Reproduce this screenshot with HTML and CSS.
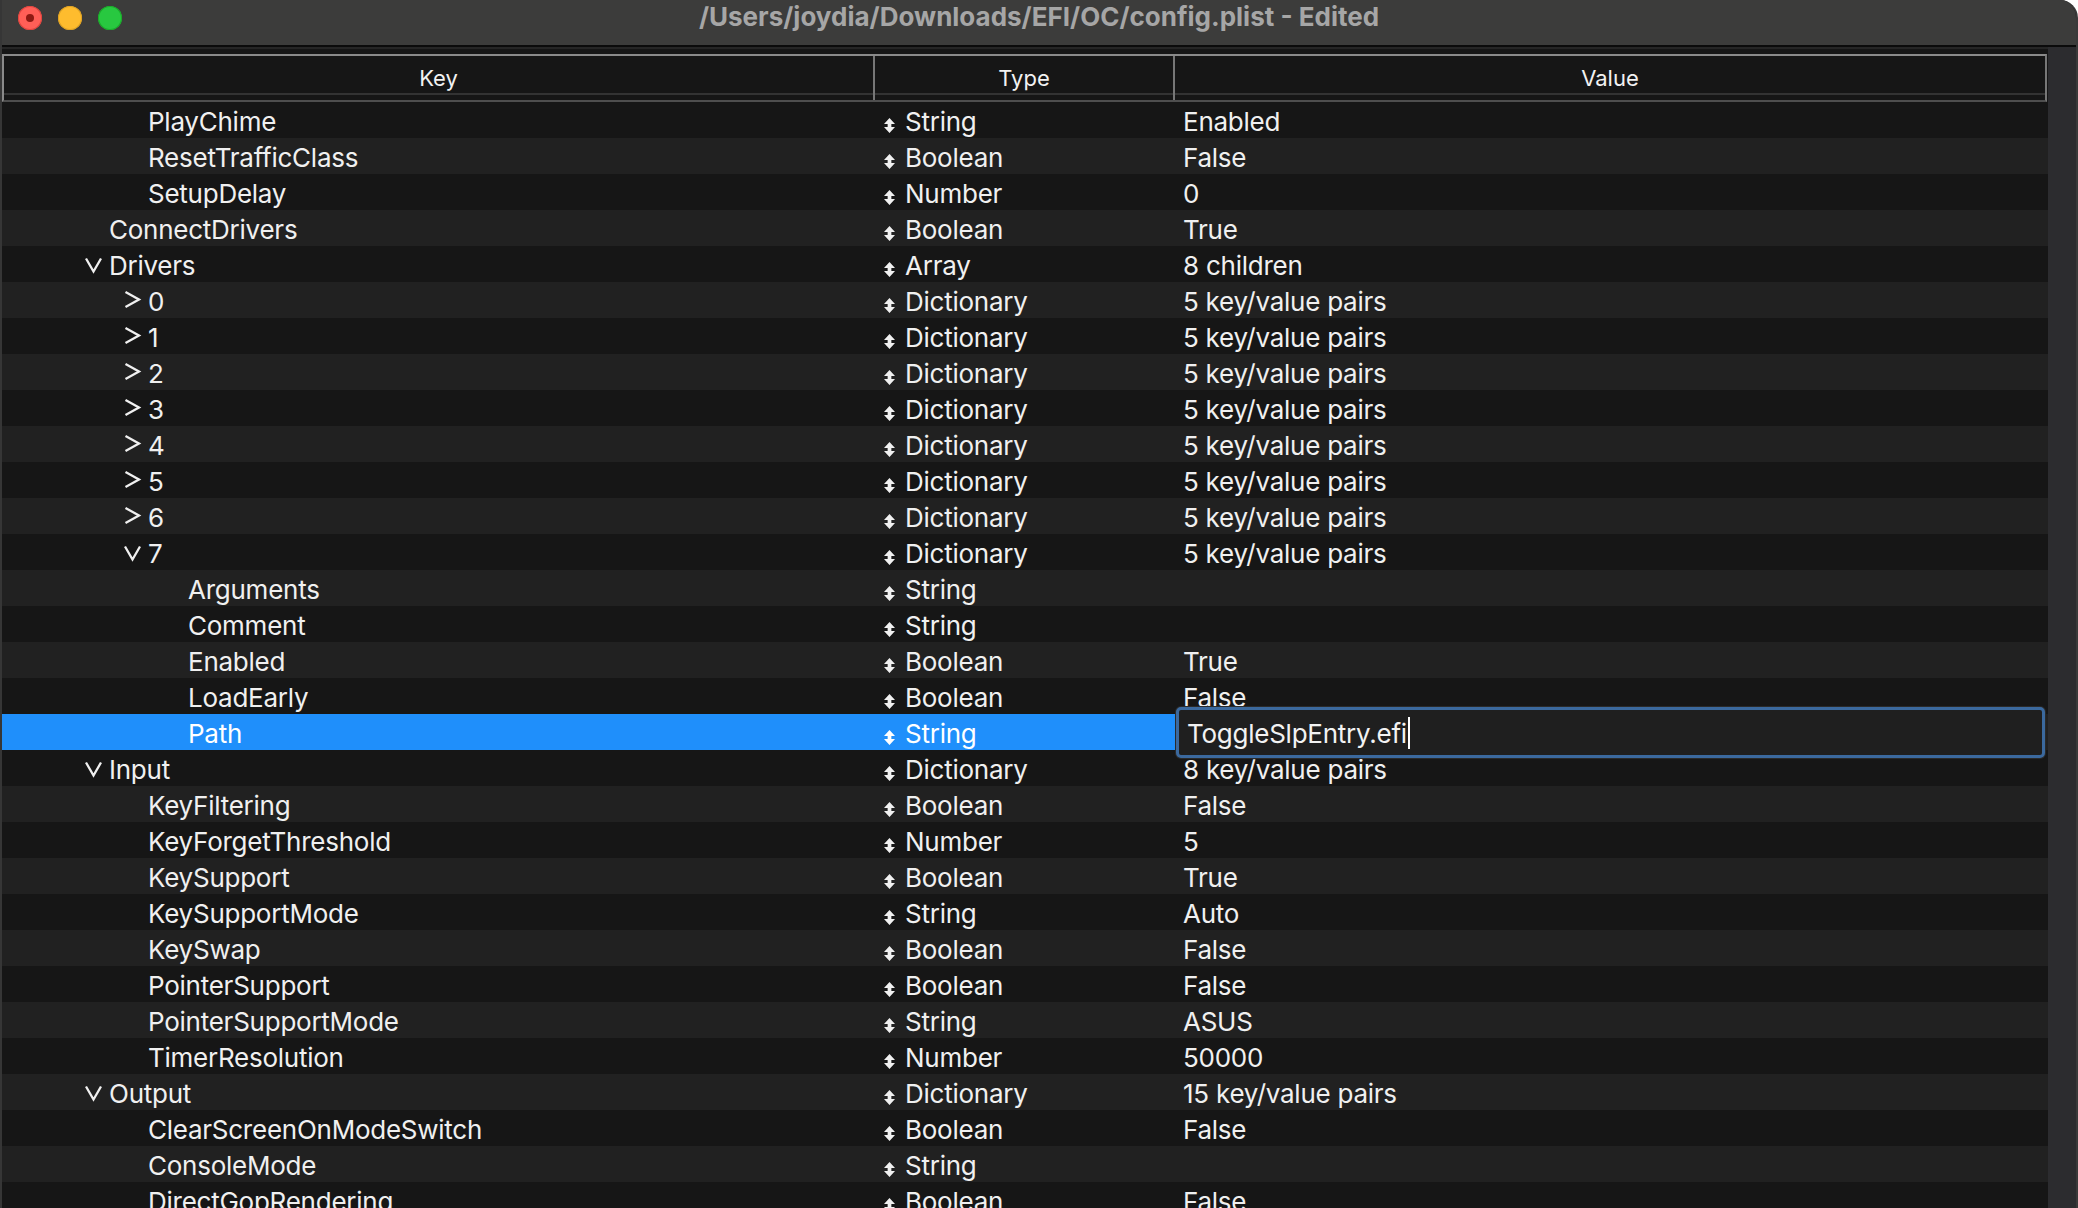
FILE: index.html
```html
<!DOCTYPE html>
<html>
<head>
<meta charset="utf-8">
<title>config.plist</title>
<link rel="stylesheet" href="styles.css">
</head>
<body>
<div class="window">
  <div class="titlebar">
    <div class="lights">
      <span class="light close"><span class="dot"></span></span>
      <span class="light min"></span>
      <span class="light max"></span>
    </div>
    <div class="title">/Users/joydia/Downloads/EFI/OC/config.plist - Edited</div>
    <div class="spacer"></div>
  </div>
  <div class="main">
    <div class="table">
      <div class="header">
        <div class="hc">Key</div>
        <div class="hc">Type</div>
        <div class="hc last">Value</div>
      </div>
      <div class="rows">
        <div class="row"><div class="k l1"><span class="chev"></span>PlayChime</div><div class="t"><span class="ud"></span>String</div><div class="v">Enabled</div></div>
        <div class="row"><div class="k l1"><span class="chev"></span>ResetTrafficClass</div><div class="t"><span class="ud"></span>Boolean</div><div class="v">False</div></div>
        <div class="row"><div class="k l1"><span class="chev"></span>SetupDelay</div><div class="t"><span class="ud"></span>Number</div><div class="v">0</div></div>
        <div class="row"><div class="k l0"><span class="chev"></span>ConnectDrivers</div><div class="t"><span class="ud"></span>Boolean</div><div class="v">True</div></div>
        <div class="row"><div class="k l0"><span class="chev"><svg width="24" height="36" viewBox="0 0 24 36"><path d="M1 12.5 L8.5 25.5 L16 12.5" fill="none" stroke="#f0f0f0" stroke-width="2.3"/></svg></span>Drivers</div><div class="t"><span class="ud"></span>Array</div><div class="v">8 children</div></div>
        <div class="row"><div class="k l1"><span class="chev"><svg width="24" height="36" viewBox="0 0 24 36"><path d="M1.5 10 L15 17.5 L1.5 25" fill="none" stroke="#f0f0f0" stroke-width="2.3"/></svg></span>0</div><div class="t"><span class="ud"></span>Dictionary</div><div class="v">5 key/value pairs</div></div>
        <div class="row"><div class="k l1"><span class="chev"><svg width="24" height="36" viewBox="0 0 24 36"><path d="M1.5 10 L15 17.5 L1.5 25" fill="none" stroke="#f0f0f0" stroke-width="2.3"/></svg></span>1</div><div class="t"><span class="ud"></span>Dictionary</div><div class="v">5 key/value pairs</div></div>
        <div class="row"><div class="k l1"><span class="chev"><svg width="24" height="36" viewBox="0 0 24 36"><path d="M1.5 10 L15 17.5 L1.5 25" fill="none" stroke="#f0f0f0" stroke-width="2.3"/></svg></span>2</div><div class="t"><span class="ud"></span>Dictionary</div><div class="v">5 key/value pairs</div></div>
        <div class="row"><div class="k l1"><span class="chev"><svg width="24" height="36" viewBox="0 0 24 36"><path d="M1.5 10 L15 17.5 L1.5 25" fill="none" stroke="#f0f0f0" stroke-width="2.3"/></svg></span>3</div><div class="t"><span class="ud"></span>Dictionary</div><div class="v">5 key/value pairs</div></div>
        <div class="row"><div class="k l1"><span class="chev"><svg width="24" height="36" viewBox="0 0 24 36"><path d="M1.5 10 L15 17.5 L1.5 25" fill="none" stroke="#f0f0f0" stroke-width="2.3"/></svg></span>4</div><div class="t"><span class="ud"></span>Dictionary</div><div class="v">5 key/value pairs</div></div>
        <div class="row"><div class="k l1"><span class="chev"><svg width="24" height="36" viewBox="0 0 24 36"><path d="M1.5 10 L15 17.5 L1.5 25" fill="none" stroke="#f0f0f0" stroke-width="2.3"/></svg></span>5</div><div class="t"><span class="ud"></span>Dictionary</div><div class="v">5 key/value pairs</div></div>
        <div class="row"><div class="k l1"><span class="chev"><svg width="24" height="36" viewBox="0 0 24 36"><path d="M1.5 10 L15 17.5 L1.5 25" fill="none" stroke="#f0f0f0" stroke-width="2.3"/></svg></span>6</div><div class="t"><span class="ud"></span>Dictionary</div><div class="v">5 key/value pairs</div></div>
        <div class="row"><div class="k l1"><span class="chev"><svg width="24" height="36" viewBox="0 0 24 36"><path d="M1 12.5 L8.5 25.5 L16 12.5" fill="none" stroke="#f0f0f0" stroke-width="2.3"/></svg></span>7</div><div class="t"><span class="ud"></span>Dictionary</div><div class="v">5 key/value pairs</div></div>
        <div class="row"><div class="k l2"><span class="chev"></span>Arguments</div><div class="t"><span class="ud"></span>String</div><div class="v"></div></div>
        <div class="row"><div class="k l2"><span class="chev"></span>Comment</div><div class="t"><span class="ud"></span>String</div><div class="v"></div></div>
        <div class="row"><div class="k l2"><span class="chev"></span>Enabled</div><div class="t"><span class="ud"></span>Boolean</div><div class="v">True</div></div>
        <div class="row"><div class="k l2"><span class="chev"></span>LoadEarly</div><div class="t"><span class="ud"></span>Boolean</div><div class="v">False</div></div>
        <div class="row sel"><div class="k l2"><span class="chev"></span>Path</div><div class="t"><span class="ud"></span>String</div><div class="v editing"><div class="edit">ToggleSlpEntry.efi<span class="caret"></span></div></div></div>
        <div class="row"><div class="k l0"><span class="chev"><svg width="24" height="36" viewBox="0 0 24 36"><path d="M1 12.5 L8.5 25.5 L16 12.5" fill="none" stroke="#f0f0f0" stroke-width="2.3"/></svg></span>Input</div><div class="t"><span class="ud"></span>Dictionary</div><div class="v">8 key/value pairs</div></div>
        <div class="row"><div class="k l1"><span class="chev"></span>KeyFiltering</div><div class="t"><span class="ud"></span>Boolean</div><div class="v">False</div></div>
        <div class="row"><div class="k l1"><span class="chev"></span>KeyForgetThreshold</div><div class="t"><span class="ud"></span>Number</div><div class="v">5</div></div>
        <div class="row"><div class="k l1"><span class="chev"></span>KeySupport</div><div class="t"><span class="ud"></span>Boolean</div><div class="v">True</div></div>
        <div class="row"><div class="k l1"><span class="chev"></span>KeySupportMode</div><div class="t"><span class="ud"></span>String</div><div class="v">Auto</div></div>
        <div class="row"><div class="k l1"><span class="chev"></span>KeySwap</div><div class="t"><span class="ud"></span>Boolean</div><div class="v">False</div></div>
        <div class="row"><div class="k l1"><span class="chev"></span>PointerSupport</div><div class="t"><span class="ud"></span>Boolean</div><div class="v">False</div></div>
        <div class="row"><div class="k l1"><span class="chev"></span>PointerSupportMode</div><div class="t"><span class="ud"></span>String</div><div class="v">ASUS</div></div>
        <div class="row"><div class="k l1"><span class="chev"></span>TimerResolution</div><div class="t"><span class="ud"></span>Number</div><div class="v">50000</div></div>
        <div class="row"><div class="k l0"><span class="chev"><svg width="24" height="36" viewBox="0 0 24 36"><path d="M1 12.5 L8.5 25.5 L16 12.5" fill="none" stroke="#f0f0f0" stroke-width="2.3"/></svg></span>Output</div><div class="t"><span class="ud"></span>Dictionary</div><div class="v">15 key/value pairs</div></div>
        <div class="row"><div class="k l1"><span class="chev"></span>ClearScreenOnModeSwitch</div><div class="t"><span class="ud"></span>Boolean</div><div class="v">False</div></div>
        <div class="row"><div class="k l1"><span class="chev"></span>ConsoleMode</div><div class="t"><span class="ud"></span>String</div><div class="v"></div></div>
        <div class="row"><div class="k l1"><span class="chev"></span>DirectGopRendering</div><div class="t"><span class="ud"></span>Boolean</div><div class="v">False</div></div>
      </div>
    </div>
    <div class="scrollbar"></div>
  </div>
</div>
</body>
</html>
```

FILE: styles.css
```css
* { box-sizing: border-box; }
html, body { margin: 0; padding: 0; }
body {
  width: 2078px;
  height: 1208px;
  overflow: hidden;
  background: #ffffff;
  font-family: "Inter", "Noto Sans", sans-serif;
}
.window {
  width: 2078px;
  height: 1208px;
  background: #1a1a1a;
  border-left: 2px solid #363636;
  border-right: 2px solid #3a3a3a;
  border-top-right-radius: 18px;
  overflow: hidden;
  display: flex;
  flex-direction: column;
}
.titlebar {
  height: 47px;
  flex: none;
  background: #3c3c3b;
  border-bottom: 2px solid #0b0b0b;
  display: grid;
  grid-template-columns: 1fr auto 1fr;
}
.lights {
  display: flex;
  gap: 16px;
  padding: 6px 0 0 16px;
}
.light {
  width: 24px;
  height: 24px;
  border-radius: 50%;
  display: flex;
  align-items: center;
  justify-content: center;
}
.close { background: #ff5f57; box-shadow: inset 0 0 0 1px #e0443e; }
.min { background: #febc2e; box-shadow: inset 0 0 0 1px #dea123; }
.max { background: #28c840; box-shadow: inset 0 0 0 1px #1aab29; }
.dot {
  width: 8px;
  height: 8px;
  border-radius: 50%;
  background: #8e1a13;
}
.title {
  color: #a6a6a6;
  font-size: 26px;
  font-weight: 700;
  line-height: 30px;
  padding-top: 2px;
  white-space: nowrap;
}
.main {
  flex: 1;
  display: flex;
  min-height: 0;
}
.table {
  flex: 1;
  background: #161616;
  border-top: 2px solid #262626;
  padding-top: 5px;
  display: flex;
  flex-direction: column;
  min-width: 0;
}
.header {
  display: grid;
  grid-template-columns: 871px 300px 1fr;
  margin-right: 1px;
  border-top: 2px solid #8a8a8a;
  border-left: 2px solid #8a8a8a;
  border-right: 2px solid #777777;
  border-bottom: 2px solid #4e4e4e;
  flex: none;
}
.hc {
  height: 44px;
  background: linear-gradient(to bottom, #161616 0, #161616 37px, #333333 37px, #333333 39px, #161616 39px);
  border-right: 2px solid #777777;
  color: #f2f2f2;
  font-size: 22px;
  line-height: 26px;
  padding-top: 9px;
  text-align: center;
}
.hc.last { border-right: none; }
.rows {
  flex: 1;
  background: #161616;
}
.row {
  display: grid;
  grid-template-columns: 873px 300px 1fr;
  height: 36px;
  font-size: 26px;
  letter-spacing: -0.25px;
  color: #f0f0f0;
  white-space: nowrap;
}
.row:nth-child(odd) { background: #161616; }
.row:nth-child(even) { background: #212121; }
.k, .t, .v {
  height: 36px;
  padding-top: 3px;
  line-height: 33px;
}
.k { overflow: hidden; }
.l0 { padding-left: 83px; }
.l1 { padding-left: 122px; }
.l2 { padding-left: 162px; }
.chev {
  display: inline-block;
  width: 24px;
  height: 33px;
  vertical-align: top;
  margin-top: -3px;
}
.chev svg { display: block; }
.t { padding-left: 9px; }
.ud {
  display: inline-block;
  width: 11px;
  height: 15px;
  margin-right: 10px;
  vertical-align: -2px;
  background: #f0f0f0;
  clip-path: polygon(50% 0, 100% 40%, 67% 40%, 67% 60%, 100% 60%, 50% 100%, 0 60%, 33% 60%, 33% 40%, 0 40%);
}
.v { padding-left: 8px; }
.row.sel .k, .row.sel .t { background: #1f8ffb; color: #ffffff; }
.row.sel .ud { background: #ffffff; }
.v.editing { position: relative; }
.edit {
  position: absolute;
  left: 1px;
  right: 3px;
  top: -7px;
  bottom: -8px;
  z-index: 1;
  border: 3px solid #3b699e;
  border-radius: 5px;
  background: #1f1f1f;
  box-shadow: 0 0 0 1px #2a2a2a;
  padding: 6px 0 0 8px;
  line-height: 36px;
  color: #f2f2f2;
}
.caret {
  display: inline-block;
  width: 2px;
  height: 32px;
  margin-left: 1px;
  background: #ffffff;
  vertical-align: -6px;
}
.scrollbar {
  width: 28px;
  flex: none;
  background: #2c2c2f;
}
```
